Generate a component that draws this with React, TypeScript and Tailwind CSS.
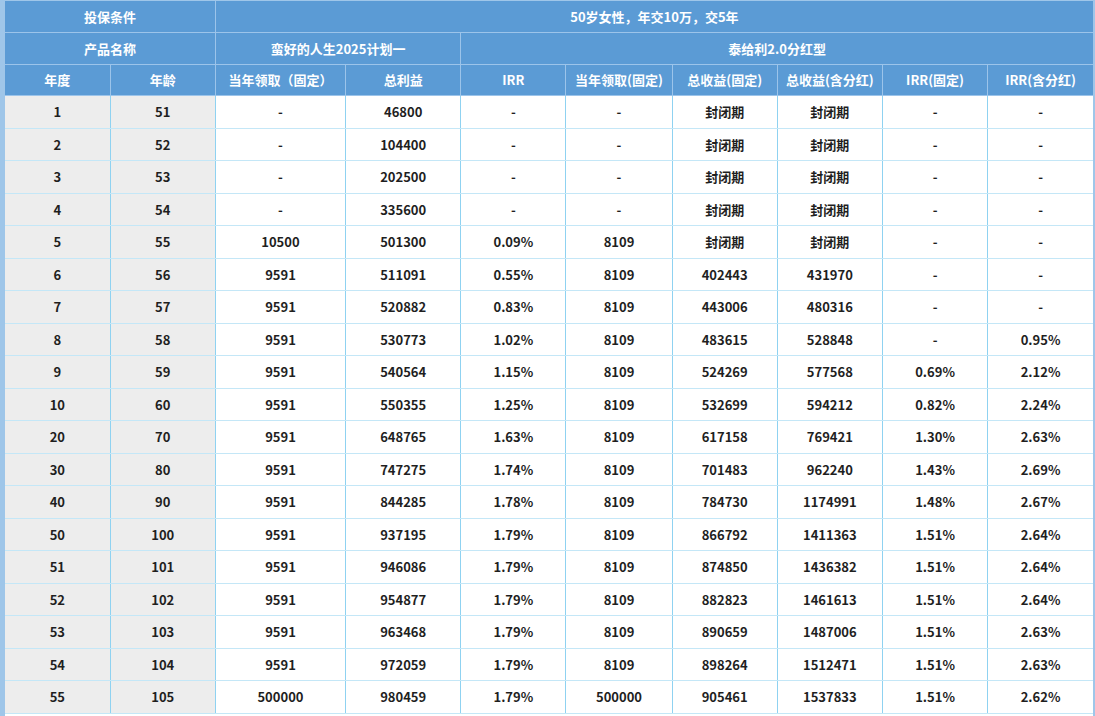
import React from "react";

const rows: string[][] = [
  ["1", "51", "-", "46800", "-", "-", "封闭期", "封闭期", "-", "-"],
  ["2", "52", "-", "104400", "-", "-", "封闭期", "封闭期", "-", "-"],
  ["3", "53", "-", "202500", "-", "-", "封闭期", "封闭期", "-", "-"],
  ["4", "54", "-", "335600", "-", "-", "封闭期", "封闭期", "-", "-"],
  ["5", "55", "10500", "501300", "0.09%", "8109", "封闭期", "封闭期", "-", "-"],
  ["6", "56", "9591", "511091", "0.55%", "8109", "402443", "431970", "-", "-"],
  ["7", "57", "9591", "520882", "0.83%", "8109", "443006", "480316", "-", "-"],
  ["8", "58", "9591", "530773", "1.02%", "8109", "483615", "528848", "-", "0.95%"],
  ["9", "59", "9591", "540564", "1.15%", "8109", "524269", "577568", "0.69%", "2.12%"],
  ["10", "60", "9591", "550355", "1.25%", "8109", "532699", "594212", "0.82%", "2.24%"],
  ["20", "70", "9591", "648765", "1.63%", "8109", "617158", "769421", "1.30%", "2.63%"],
  ["30", "80", "9591", "747275", "1.74%", "8109", "701483", "962240", "1.43%", "2.69%"],
  ["40", "90", "9591", "844285", "1.78%", "8109", "784730", "1174991", "1.48%", "2.67%"],
  ["50", "100", "9591", "937195", "1.79%", "8109", "866792", "1411363", "1.51%", "2.64%"],
  ["51", "101", "9591", "946086", "1.79%", "8109", "874850", "1436382", "1.51%", "2.64%"],
  ["52", "102", "9591", "954877", "1.79%", "8109", "882823", "1461613", "1.51%", "2.64%"],
  ["53", "103", "9591", "963468", "1.79%", "8109", "890659", "1487006", "1.51%", "2.63%"],
  ["54", "104", "9591", "972059", "1.79%", "8109", "898264", "1512471", "1.51%", "2.63%"],
  ["55", "105", "500000", "980459", "1.79%", "500000", "905461", "1537833", "1.51%", "2.62%"],
];

const widths = [105, 105, 130, 115, 105, 106, 105, 105, 105, 105];

const th =
  "border border-[#9cc4ea] bg-[#5b9bd5] text-white font-bold text-[13px] text-center align-middle p-0";

export default function App() {
  return (
    <div
      className="h-screen w-full overflow-hidden bg-white border-l-[5px] border-r-[2px] border-t-[1px] border-[#9fc6e9]"
      style={{ fontFamily: '"Noto Sans CJK SC", "Noto Sans", sans-serif' }}
    >
      <table className="table-fixed border-collapse w-full">
        <colgroup>
          {widths.map((w, i) => (
            <col key={i} style={{ width: w }} />
          ))}
        </colgroup>
        <thead>
          <tr className="h-[31.5px]">
            <th colSpan={2} className={th + " border-t-0 border-l-0"}>投保条件</th>
            <th colSpan={8} className={th + " border-t-0 border-r-0"}>50岁女性，年交10万，交5年</th>
          </tr>
          <tr className="h-[31.5px]">
            <th colSpan={2} className={th + " border-l-0"}>产品名称</th>
            <th colSpan={2} className={th}>蛮好的人生2025计划一</th>
            <th colSpan={6} className={th + " border-r-0"}>泰给利2.0分红型</th>
          </tr>
          <tr className="h-[31.5px]">
            <th className={th + " border-l-0"}>年度</th>
            <th className={th}>年龄</th>
            <th className={th}>当年领取（固定）</th>
            <th className={th}>总利益</th>
            <th className={th}>IRR</th>
            <th className={th}>当年领取(固定)</th>
            <th className={th}>总收益(固定)</th>
            <th className={th}>总收益(含分红)</th>
            <th className={th}>IRR(固定)</th>
            <th className={th + " border-r-0"}>IRR(含分红)</th>
          </tr>
        </thead>
        <tbody>
          {rows.map((r, ri) => (
            <tr key={ri} className="h-[32.5px]">
              {r.map((c, ci) => (
                <td
                  key={ci}
                  className={
                    "border-x border-x-[#8fd2f1] border-y border-y-[#c4e7f7] text-center align-middle p-0 text-[13px] font-bold text-[#1f1f1f] " +
                    (ci < 2 ? "bg-[#ededed] " : "bg-white ") +
                    (ci === 0 ? "border-l-0 " : "") +
                    (ci === 9 ? "border-r-0 " : "")
                  }
                >
                  {c}
                </td>
              ))}
            </tr>
          ))}
        </tbody>
      </table>
    </div>
  );
}
